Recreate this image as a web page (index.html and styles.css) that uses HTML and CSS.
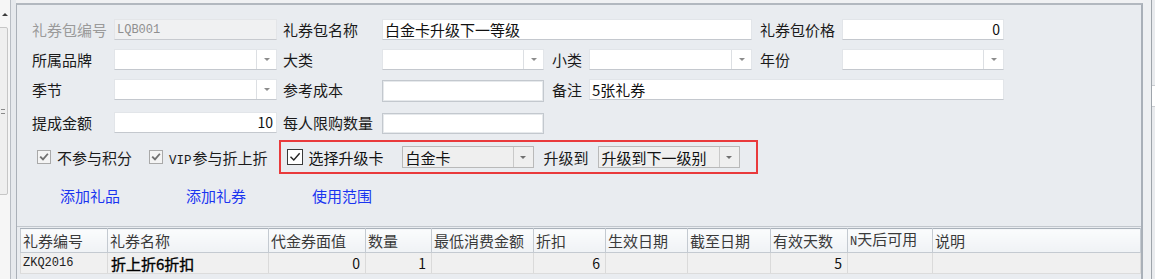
FILE: index.html
```html
<!DOCTYPE html>
<html lang="zh-CN">
<head>
<meta charset="utf-8">
<title>礼券包</title>
<link rel="stylesheet" href="styles.css">
</head>
<body>
<div class="screen">
  <aside class="left-rail">
    <div class="rail-bar">
      <div class="rail-arrow"></div>
      <div class="rail-thumb"><span class="grip"></span></div>
    </div>
  </aside>
  <div class="rail-gap"></div>

  <main class="panel">
    <section class="form">
      <!-- row 1 -->
      <span class="lbl muted r1 c1">礼券包编号</span>
      <div class="field disabled r1 c2"><span class="mono">LQB001</span></div>
      <span class="lbl r1 c3">礼券包名称</span>
      <div class="field r1 c4-6"><span class="val">白金卡升级下一等级</span></div>
      <span class="lbl r1 c7">礼券包价格</span>
      <div class="field num r1 c8"><span class="val">0</span></div>

      <!-- row 2 -->
      <span class="lbl r2 c1">所属品牌</span>
      <div class="field combo r2 c2"><span class="val"></span><span class="dd"><i class="tri"></i></span></div>
      <span class="lbl r2 c3">大类</span>
      <div class="field combo r2 c4"><span class="val"></span><span class="dd"><i class="tri"></i></span></div>
      <span class="lbl r2 c5">小类</span>
      <div class="field combo r2 c6"><span class="val"></span><span class="dd"><i class="tri"></i></span></div>
      <span class="lbl r2 c7">年份</span>
      <div class="field combo r2 c8"><span class="val"></span><span class="dd"><i class="tri"></i></span></div>

      <!-- row 3 -->
      <span class="lbl r3 c1">季节</span>
      <div class="field combo r3 c2"><span class="val"></span><span class="dd"><i class="tri"></i></span></div>
      <span class="lbl r3 c3">参考成本</span>
      <div class="field boxed r3 c4"><span class="val"></span></div>
      <span class="lbl r3 c5">备注</span>
      <div class="field r3 c6-8"><span class="val">5张礼券</span></div>

      <!-- row 4 -->
      <span class="lbl r4 c1">提成金额</span>
      <div class="field num r4 c2"><span class="val">10</span></div>
      <span class="lbl r4 c3">每人限购数量</span>
      <div class="field boxed r4 c4"><span class="val"></span></div>
    </section>

    <section class="checks">
      <label class="chk muted-chk"><span class="box"><svg viewBox="0 0 10 10"><path d="M1.8 5.2 L4 7.4 L8.3 2.4"/></svg></span><span class="chk-text">不参与积分</span></label>
      <label class="chk muted-chk"><span class="box"><svg viewBox="0 0 10 10"><path d="M1.8 5.2 L4 7.4 L8.3 2.4"/></svg></span><span class="chk-text"><span class="mono vip">VIP</span>参与折上折</span></label>

      <div class="upgrade">
        <label class="chk strong-chk"><span class="box"><svg viewBox="0 0 12 12"><path d="M2 6.2 L4.8 9 L10.2 2.8"/></svg></span><span class="chk-text">选择升级卡</span></label>
        <div class="field combo grey w-card"><span class="val">白金卡</span><span class="dd"><i class="tri"></i></span></div>
        <span class="lbl up-lbl">升级到</span>
        <div class="field combo grey w-level"><span class="val">升级到下一级别</span><span class="dd"><i class="tri"></i></span></div>
      </div>
    </section>

    <nav class="links">
      <a class="link">添加礼品</a>
      <a class="link">添加礼券</a>
      <a class="link">使用范围</a>
    </nav>

    <div class="table-wrap">
      <table class="grid">
        <colgroup>
          <col style="width:87px"><col style="width:161px"><col style="width:97px"><col style="width:66px">
          <col style="width:102px"><col style="width:72px"><col style="width:82px"><col style="width:83px">
          <col style="width:77px"><col style="width:85px"><col style="width:208px">
        </colgroup>
        <thead>
          <tr>
            <th>礼券编号</th><th>礼券名称</th><th>代金券面值</th><th>数量</th><th>最低消费金额</th><th>折扣</th>
            <th>生效日期</th><th>截至日期</th><th>有效天数</th><th><span class="mono n">N</span>天后可用</th><th>说明</th>
          </tr>
        </thead>
        <tbody>
          <tr>
            <td class="mono code">ZKQ2016</td>
            <td class="name">折上折6折扣</td>
            <td class="r">0</td>
            <td class="r">1</td>
            <td></td>
            <td class="r">6</td>
            <td></td>
            <td></td>
            <td class="r">5</td>
            <td></td>
            <td></td>
          </tr>
        </tbody>
      </table>
    </div>
  </main>

  <aside class="right-rail">
    <div class="rr-inner"><span class="rr-box"></span></div>
  </aside>
</div>
</body>
</html>
```
FILE: styles.css
```css
* { box-sizing: border-box; }

html, body {
  margin: 0;
  padding: 0;
}

body {
  width: 1155px;
  height: 279px;
  overflow: hidden;
  background: #f0f1f3;
  font-family: "Noto Sans CJK SC", "Noto Sans", sans-serif;
  font-size: 15px;
  color: #1b1b1b;
}

.screen {
  display: flex;
  height: 279px;
  padding-top: 3px;
}

/* left scroll rail (partly off-screen) */
.left-rail {
  width: 11px;
  margin-top: -3px;
  background: #f6f6f6;
  border-right: 1px solid #b8bdc4;
  overflow: hidden;
}
.rail-bar {
  width: 17px;
  margin-left: -9px;
  display: flex;
  flex-direction: column;
  align-items: center;
}
.rail-arrow {
  margin-top: 13px;
  margin-left: 10px;
  width: 0;
  height: 0;
  border-left: 3px solid transparent;
  border-right: 3px solid transparent;
  border-bottom: 3px solid #3c3c3c;
}
.rail-thumb {
  margin-top: 11px;
  width: 16px;
  height: 168px;
  border: 1px solid #c6c6c6;
  border-radius: 2px;
  background: #efefef;
  display: flex;
  align-items: center;
  justify-content: flex-end;
}
.grip {
  width: 4px;
  height: 5px;
  margin-right: 2px;
  border-top: 1px solid #8a8a8a;
  border-bottom: 1px solid #8a8a8a;
}

.rail-gap {
  width: 5px;
  margin-top: -3px;
  background: #e6e9ed;
}

/* main panel */
.panel {
  width: 1127px;
  background: #e9ecf0;
  border-top: 2px solid #b2b8bf;
  border-left: 1px solid #aab0b8;
  border-right: 2px solid #a9b0b8;
  display: flex;
  flex-direction: column;
}

.form {
  display: grid;
  grid-template-columns: 82px 163px 6px 99px 162px 8px 37px 163px 8px 82px 162px;
  row-gap: 9px;
  padding: 14px 0 0 15px;
  align-items: start;
}

.r1 { grid-row: 1; }
.r2 { grid-row: 2; }
.r3 { grid-row: 3; }
.r4 { grid-row: 4; }
.c1 { grid-column: 1; }
.c2 { grid-column: 2; }
.c3 { grid-column: 4; }
.c4 { grid-column: 5; }
.c5 { grid-column: 7; }
.c6 { grid-column: 8; }
.c7 { grid-column: 10; }
.c8 { grid-column: 11; }
.c4-6 { grid-column: 5 / 9; }
.c6-8 { grid-column: 8 / 12; }

.r4 { margin-top: 1px; }
.r4.boxed { margin-top: 2px; }
.r3.boxed { margin-top: 1px; height: 22px; }

.lbl {
  height: 21px;
  line-height: 21px;
  font-size: 15px;
  color: #1a1a1a;
  white-space: nowrap;
}
.lbl.muted { color: #9a9a9a; }

.field {
  height: 21px;
  background: #ffffff;
  border: 1px solid #e2e5e9;
  border-bottom-color: #c4c8ce;
  display: flex;
  align-items: center;
  overflow: hidden;
}
.field .val {
  flex: 1;
  padding: 0 2px;
  font-size: 15px;
  line-height: 19px;
  color: #111;
  white-space: nowrap;
}
.field.num .val {
  text-align: right;
  padding-right: 3px;
  font-size: 14px;
}
.field.disabled {
  background: #f0f1f2;
  border-color: #e3e5e8;
  border-bottom-color: #c7cacf;
}
.field.boxed {
  border: 1px solid #c3c8ce;
  box-shadow: inset 0 0 0 1px #e6e9ec;
}

.mono {
  font-family: "Liberation Mono", "DejaVu Sans Mono", monospace;
  font-size: 12px;
}
.field.disabled .mono {
  padding-left: 2px;
  color: #8f8f8f;
}

.combo .dd {
  width: 20px;
  align-self: stretch;
  border-left: 1px solid #dcdfe3;
  display: flex;
  align-items: center;
  justify-content: center;
}
.tri {
  width: 0;
  height: 0;
  border-left: 3px solid transparent;
  border-right: 3px solid transparent;
  border-top: 3px solid #8c8c8c;
}

/* checkbox row */
.checks {
  display: flex;
  align-items: center;
  margin-top: 6px;
  padding-left: 20px;
}
.chk {
  display: flex;
  align-items: center;
}
.chk .box {
  display: flex;
  align-items: center;
  justify-content: center;
  background: #f4f4f4;
  border: 1px solid #a9a9a9;
}
.chk svg path {
  fill: none;
  stroke-linecap: square;
}
.muted-chk .box {
  width: 14px;
  height: 14px;
}
.muted-chk svg {
  width: 10px;
  height: 10px;
}
.muted-chk svg path {
  stroke: #707070;
  stroke-width: 1.8;
}
.muted-chk .chk-text {
  margin-left: 6px;
  font-size: 15px;
  color: #1a1a1a;
}
.muted-chk + .muted-chk { margin-left: 17px; }
.vip { font-size: 12.5px; margin-right: 1px; }

.upgrade {
  margin-left: 11px;
  height: 34px;
  border: 2px solid #e93a3c;
  display: flex;
  align-items: center;
  padding: 0 16px 0 6px;
}
.strong-chk .box {
  width: 16px;
  height: 16px;
  background: #ffffff;
  border-color: #3a3a3a;
}
.strong-chk svg {
  width: 12px;
  height: 12px;
}
.strong-chk svg path {
  stroke: #222;
  stroke-width: 1.4;
}
.strong-chk .chk-text {
  margin-left: 6px;
  font-size: 15px;
  color: #111;
}

.field.grey {
  background: #efefef;
  border: 1px solid #b9b9b9;
  height: 22px;
}
.field.grey .dd { border-left-color: #c9c9c9; }
.field.grey .tri { border-top-color: #707070; }
.field.grey .val { padding-left: 3px; color: #111; }
.w-card { width: 132px; margin-left: 18px; }
.up-lbl { margin-left: 10px; }
.w-level { width: 142px; margin-left: 9px; }

/* links */
.links {
  display: flex;
  gap: 66px;
  padding-left: 43px;
  margin-top: 11px;
  height: 21px;
  line-height: 21px;
}
.link {
  font-size: 15px;
  color: #1a35f0;
  cursor: pointer;
}

/* table */
.table-wrap {
  margin-top: 20px;
  border-top: 1px solid #c2c7cd;
  padding: 1px 0 0 3px;
}
.grid {
  table-layout: fixed;
  border-collapse: collapse;
  width: 1121px;
}
.grid th,
.grid td {
  height: 21px;
  padding: 0 2px;
  white-space: nowrap;
  overflow: hidden;
  text-align: left;
  font-weight: normal;
}
.grid th {
  font-size: 15px;
  color: #3a3a3a;
  background: linear-gradient(#fbfcfd, #eff2f5);
  border: 1px solid #c4cad1;
  border-top-color: #a9b1ba;
  line-height: 19px;
}
.grid td {
  background: #f0f0f0;
  border-left: 1px solid #dadada;
  border-right: 1px solid #dadada;
  border-bottom: 1px solid #dcdcdc;
  font-size: 14px;
  color: #111;
  line-height: 19px;
}
.grid td.r {
  text-align: right;
  padding-right: 5px;
}
.grid td.code {
  font-size: 12px;
  color: #222;
}
.grid td.name {
  font-size: 15px;
  font-weight: normal;
  color: #000;
  -webkit-text-stroke: 0.35px #000;
  padding-left: 3px;
}
.n { font-size: 12px; }

/* right rail */
.right-rail {
  width: 12px;
  margin-top: -3px;
  background: #eef0f2;
  display: flex;
}
.rr-inner {
  margin-left: 8px;
  width: 4px;
  border-left: 1px solid #9ea4ab;
  background: #e9ebee;
  padding-top: 85px;
}
.rr-box {
  display: block;
  height: 22px;
  background: #ffffff;
  border-top: 1px solid #c9ccd0;
  border-bottom: 1px solid #c9ccd0;
}
```
